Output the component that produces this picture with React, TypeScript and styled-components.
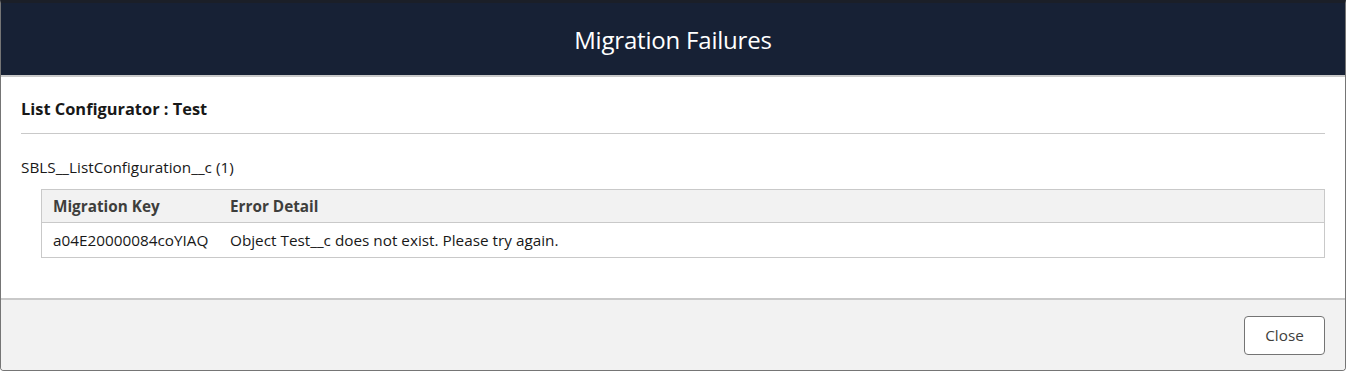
import styled, { createGlobalStyle } from 'styled-components';

const GlobalStyle = createGlobalStyle`
  html, body {
    margin: 0;
    padding: 0;
    background: #ffffff;
  }
  body {
    font-family: 'Open Sans', 'Noto Sans', Arial, sans-serif;
  }
  * {
    box-sizing: border-box;
  }
`;

const Modal = styled.div`
  width: 1346px;
  height: 371px;
  display: flex;
  flex-direction: column;
  border: 1px solid #757575;
  border-top: 3px solid #1b1f28;
  border-radius: 0 0 4px 4px;
  overflow: hidden;
  background: #fff;
`;

const Header = styled.div`
  height: 74px;
  flex-shrink: 0;
  display: flex;
  align-items: center;
  justify-content: center;
  background: #172135;
  border-bottom: 2px solid #c9c9c9;
`;

const Title = styled.h2`
  margin: 0;
  font-size: 24px;
  font-weight: 400;
  color: #ffffff;
  letter-spacing: -0.2px;
`;

const Body = styled.div`
  flex: 1;
  padding: 0 20px;
  display: flex;
  flex-direction: column;
`;

const RecordTitle = styled.h3`
  margin: 0;
  padding: 19px 0 12px;
  font-size: 16.4px;
  line-height: 25px;
  font-weight: 700;
  color: #181818;
  border-bottom: 1px solid #c9c9c9;
`;

const ObjectName = styled.div`
  margin-top: 23px;
  font-size: 15.3px;
  line-height: 20px;
  color: #181818;
`;

const Table = styled.div`
  margin: 12px 0 0 20px;
  border: 1px solid #c9c9c9;
  display: grid;
  grid-template-columns: 177px 1fr;
`;

const Cell = styled.div<{ $head?: boolean }>`
  padding: 0 11px;
  height: ${(p) => (p.$head ? '33px' : '34px')};
  display: flex;
  align-items: center;
  font-size: 15.3px;
  font-weight: ${(p) => (p.$head ? 700 : 400)};
  color: ${(p) => (p.$head ? '#3e3e3c' : '#181818')};
  background: ${(p) => (p.$head ? '#f2f2f2' : '#ffffff')};
  border-bottom: ${(p) => (p.$head ? '1px solid #c9c9c9' : 'none')};
  white-space: nowrap;
`;

const Footer = styled.div`
  height: 72px;
  flex-shrink: 0;
  display: flex;
  align-items: center;
  justify-content: flex-end;
  padding: 0 20px;
  background: #f2f2f2;
  border-top: 2px solid #c9c9c9;
`;

const Button = styled.button`
  width: 81px;
  height: 39px;
  border: 1px solid #747474;
  border-radius: 4px;
  background: #ffffff;
  font-family: inherit;
  font-size: 15.3px;
  color: #3e3e3c;
  cursor: pointer;
`;

const failures = [
  { key: 'a04E20000084coYIAQ', detail: 'Object Test__c does not exist. Please try again.' },
];

export default function App() {
  return (
    <>
      <GlobalStyle />
      <Modal>
        <Header>
          <Title>Migration Failures</Title>
        </Header>
        <Body>
          <RecordTitle>List Configurator : Test</RecordTitle>
          <ObjectName>SBLS__ListConfiguration__c ({failures.length})</ObjectName>
          <Table>
            <Cell $head>Migration Key</Cell>
            <Cell $head>Error Detail</Cell>
            {failures.map((f) => (
              <>
                <Cell key={f.key}>{f.key}</Cell>
                <Cell>{f.detail}</Cell>
              </>
            ))}
          </Table>
        </Body>
        <Footer>
          <Button>Close</Button>
        </Footer>
      </Modal>
    </>
  );
}
